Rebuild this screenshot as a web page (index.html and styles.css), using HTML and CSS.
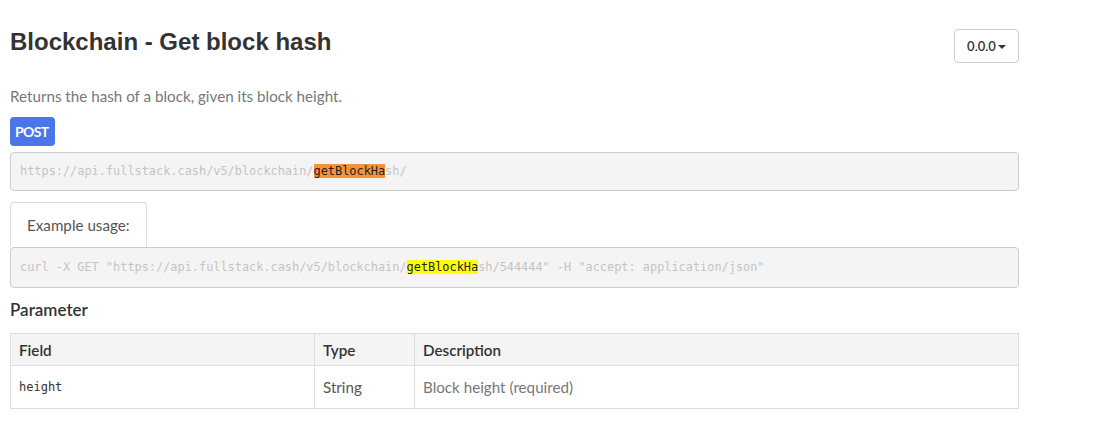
FILE: index.html
```html
<!DOCTYPE html>
<html>
<head>
<meta charset="utf-8">
<link rel="stylesheet" href="styles.css">
</head>
<body>
<div class="page">
  <div class="head">
    <h1 class="title">Blockchain - Get block hash</h1>
    <button class="version">0.0.0<span class="caret"></span></button>
  </div>
  <p class="desc">Returns the hash of a block, given its block height.</p>
  <span class="badge">POST</span>
  <pre class="url">https://api.fullstack.cash/v5/blockchain/<span class="hl-orange">getBlockHa</span>sh/</pre>
  <div class="tabs"><span class="tab">Example usage:</span></div>
  <pre class="code">curl -X GET "https://api.fullstack.cash/v5/blockchain/<span class="hl-yellow">getBlockHa</span>sh/544444" -H "accept: application/json"</pre>
  <h2 class="section">Parameter</h2>
  <table class="params">
    <thead>
      <tr><th class="c-field">Field</th><th class="c-type">Type</th><th>Description</th></tr>
    </thead>
    <tbody>
      <tr><td class="mono">height</td><td class="type">String</td><td class="descr">Block height (required)</td></tr>
    </tbody>
  </table>
</div>
</body>
</html>
```
FILE: styles.css
```css
html, body { margin: 0; padding: 0; background: #fff; }
body { font-family: Lato, "Noto Sans", sans-serif; font-size: 15px; color: #333; }
.page { width: 1009px; padding: 0 0 0 10px; }
.head { display: flex; justify-content: space-between; align-items: flex-start; padding-top: 29px; }
.title { margin: 0; font-family: "Liberation Sans", Arial, sans-serif; font-weight: bold; font-size: 24px; line-height: 26px; color: #333; }
.version { height: 34px; width: 65px; border: 1px solid #ccc; border-radius: 4px; background: #fff; font-family: Lato, sans-serif; font-size: 13px; font-weight: 600; color: #333; padding: 0; display: flex; align-items: center; justify-content: center; gap: 2px; }
.caret { display: inline-block; width: 0; height: 0; border-left: 4px solid transparent; border-right: 4px solid transparent; border-top: 4px solid #333; margin-top: 1px; }
.desc { margin: 23px 0 0; font-size: 15.2px; line-height: 20px; color: #777; }
.badge { display: inline-block; margin-top: 11px; background: #4a76e8; color: #fff; font-weight: bold; font-size: 14px; letter-spacing: -0.6px; line-height: 29px; height: 29px; padding: 0 6px 0 5px; border-radius: 4px; }
.url, .code { margin: 0; font-family: "DejaVu Sans Mono", monospace; font-size: 11.9px; color: #c4c4c4; background: #f4f4f4; border: 1px solid #ccc; border-radius: 4px; padding: 0 9px; }
.url { margin-top: 6px; height: 37px; line-height: 37px; }
.tabs { margin-top: 11px; display: flex; }
.tab { display: block; height: 44px; line-height: 44px; padding: 0 16px; border: 1px solid #ddd; border-bottom: none; border-radius: 4px 4px 0 0; color: #555; font-size: 15.2px; }
.code { height: 39px; line-height: 39px; }
.hl-orange { background: #f7923a; color: #222; }
.hl-yellow { background: #ffff00; color: #222; }
.section { margin: 11px 0 0; font-size: 17px; font-weight: 600; line-height: 22px; color: #333; }
.params { margin-top: 12px; width: 1009px; border-collapse: collapse; font-size: 15.2px; }
.params th, .params td { border: 1px solid #ddd; text-align: left; padding: 0 8px; }
.params th { background: #f4f4f4; height: 31px; font-weight: 600; color: #333; }
.params td { height: 42px; }
.c-field { width: 287px; }
.c-type { width: 83px; }
.mono { font-family: "DejaVu Sans Mono", monospace; font-size: 12px; color: #333; }
.type { color: #555; }
.descr { color: #777; }
```
